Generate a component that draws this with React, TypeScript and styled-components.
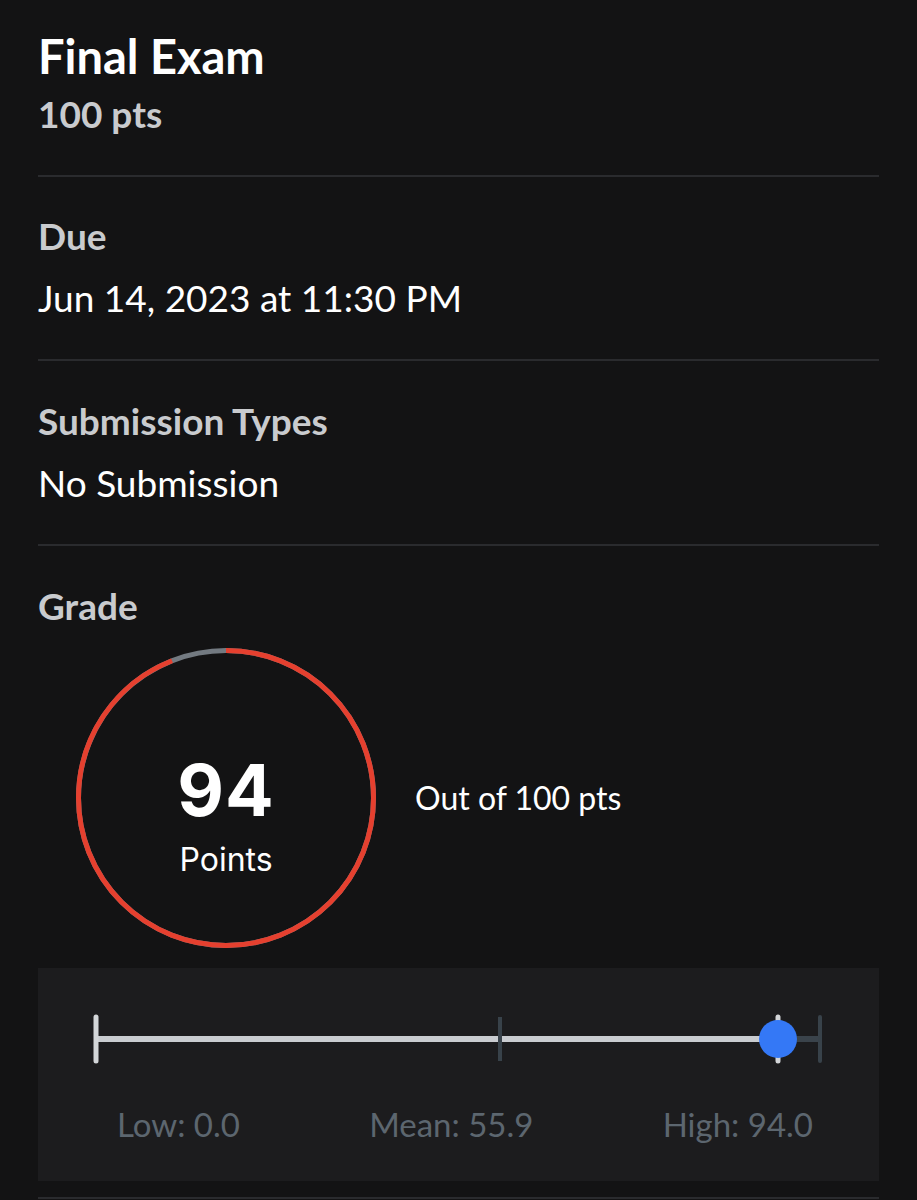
import styled, { createGlobalStyle } from 'styled-components';

const GlobalStyle = createGlobalStyle`
  html, body {
    margin: 0;
    padding: 0;
    background: #131314;
  }
  body {
    font-family: Lato, "Noto Sans", sans-serif;
    color: #ffffff;
  }
`;

const Page = styled.div`
  width: 917px;
  height: 1200px;
  overflow: hidden;
  padding: 0 38px;
  box-sizing: border-box;
  background: #131314;
`;

const Section = styled.section<{ $top: number; $bottom: number }>`
  padding: ${(p) => p.$top}px 0 ${(p) => p.$bottom}px;
  border-bottom: 2px solid #2a2b2e;
`;

const Title = styled.h1`
  margin: 0;
  font-size: 47px;
  line-height: 1.2;
  font-weight: 700;
  color: #ffffff;
`;

const Points = styled.div`
  font-size: 37px;
  line-height: 1.2;
  font-weight: 700;
  color: #c9cbce;
  margin-top: 8px;
`;

const Label = styled.div`
  font-size: 37px;
  line-height: 1.2;
  font-weight: 700;
  color: #c9cbce;
`;

const Value = styled.div`
  font-size: 37px;
  line-height: 1.2;
  font-weight: 400;
  color: #ffffff;
  margin-top: 18px;
`;

const GradeSection = styled.section`
  padding: 38px 0 16px;
  border-bottom: 2px solid #2a2b2e;
`;

const GradeRow = styled.div`
  display: flex;
  align-items: center;
  gap: 39px;
  margin-top: 19px;
  padding-left: 38px;
`;

const Ring = styled.div`
  position: relative;
  width: 300px;
  height: 300px;
  flex-shrink: 0;
`;

const RingText = styled.div`
  position: absolute;
  inset: 0;
  display: flex;
  flex-direction: column;
  align-items: center;
  font-family: Inter, Roboto, sans-serif;
  padding-top: 106px;
`;

const Score = styled.div`
  font-size: 72px;
  line-height: 1;
  font-weight: 700;
  letter-spacing: 1px;
`;

const ScoreUnit = styled.div`
  font-size: 32px;
  line-height: 1;
  font-weight: 400;
  margin-top: 18px;
`;

const OutOf = styled.div`
  font-size: 32px;
  line-height: 1.2;
  font-weight: 400;
  color: #ffffff;
`;

const StatsPanel = styled.div`
  margin-top: 20px;
  height: 213px;
  background: #1c1c1e;
  padding-top: 46px;
  box-sizing: border-box;
`;

const Plot = styled.svg`
  display: block;
`;

const StatLabels = styled.div`
  display: flex;
  justify-content: space-between;
  padding: 0 66px 0 79px;
  margin-top: 41px;
`;

const Stat = styled.span`
  font-size: 33px;
  line-height: 1.2;
  color: #5c666f;
`;

const GradeRing = ({ score, total }: { score: number; total: number }) => {
  const r = 147.5;
  const c = 2 * Math.PI * r;
  const frac = score / total;
  return (
    <svg width="300" height="300" viewBox="0 0 300 300">
      <circle cx="150" cy="150" r={r} fill="none" stroke="#737a81" strokeWidth="5" />
      <circle
        cx="150"
        cy="150"
        r={r}
        fill="none"
        stroke="#e5402f"
        strokeWidth="5"
        strokeDasharray={`${c * frac} ${c}`}
        transform="rotate(-90 150 150)"
      />
    </svg>
  );
};

const BoxPlot = () => (
  <Plot width="841" height="50" viewBox="0 0 841 50">
    <line x1="58" y1="25" x2="740" y2="25" stroke="#c9ccd0" strokeWidth="6" />
    <line x1="740" y1="25" x2="782" y2="25" stroke="#3a434b" strokeWidth="6" />
    <line x1="58" y1="3" x2="58" y2="47" stroke="#d3d6d9" strokeWidth="5" strokeLinecap="round" />
    <line x1="462" y1="3" x2="462" y2="47" stroke="#38424a" strokeWidth="4" />
    <line x1="782" y1="3" x2="782" y2="47" stroke="#38424a" strokeWidth="4" strokeLinecap="round" />
    <line x1="740" y1="3" x2="740" y2="47" stroke="#d3d6d9" strokeWidth="5" strokeLinecap="round" />
    <circle cx="740" cy="25" r="19" fill="#3478f6" />
  </Plot>
);

export default function App() {
  return (
    <Page>
      <GlobalStyle />
      <Section $top={28} $bottom={38}>
        <Title>Final Exam</Title>
        <Points>100 pts</Points>
      </Section>
      <Section $top={37} $bottom={38}>
        <Label>Due</Label>
        <Value>Jun 14, 2023 at 11:30 PM</Value>
      </Section>
      <Section $top={38} $bottom={39}>
        <Label>Submission Types</Label>
        <Value>No Submission</Value>
      </Section>
      <GradeSection>
        <Label>Grade</Label>
        <GradeRow>
          <Ring>
            <GradeRing score={94} total={100} />
            <RingText>
              <Score>94</Score>
              <ScoreUnit>Points</ScoreUnit>
            </RingText>
          </Ring>
          <OutOf>Out of 100 pts</OutOf>
        </GradeRow>
        <StatsPanel>
          <BoxPlot />
          <StatLabels>
            <Stat>Low: 0.0</Stat>
            <Stat>Mean: 55.9</Stat>
            <Stat>High: 94.0</Stat>
          </StatLabels>
        </StatsPanel>
      </GradeSection>
    </Page>
  );
}
